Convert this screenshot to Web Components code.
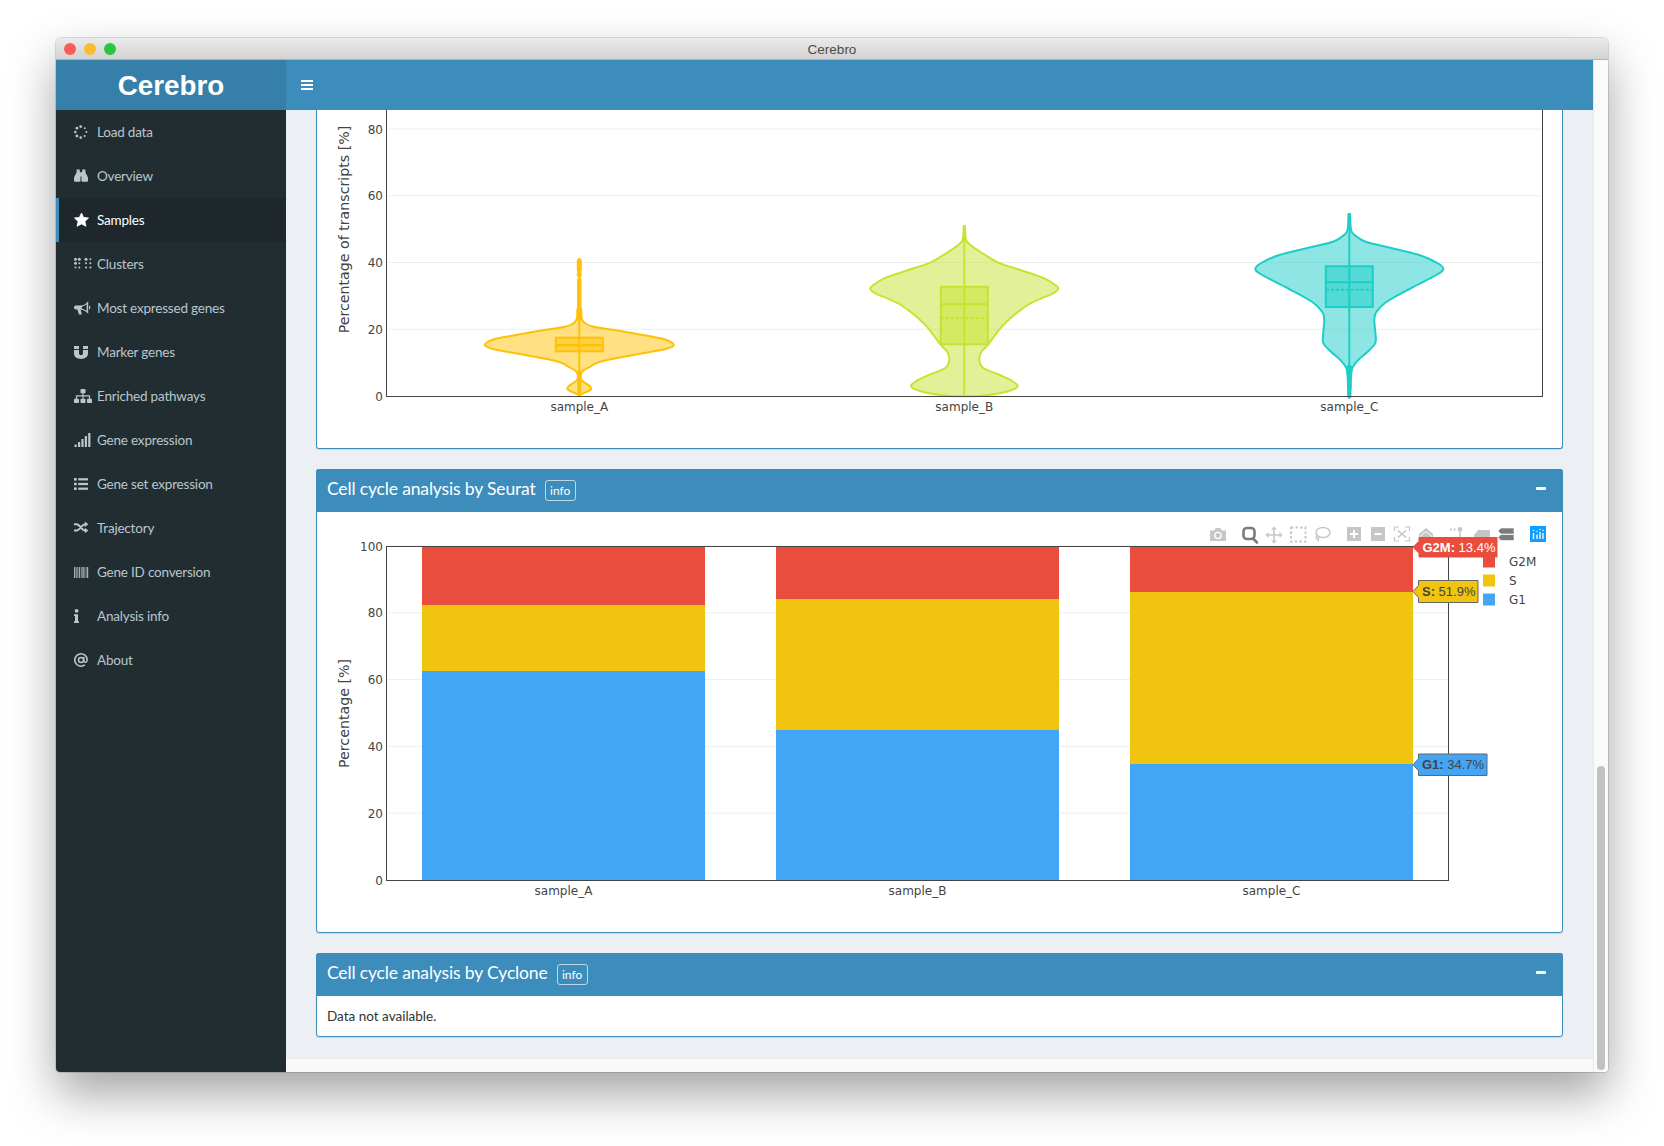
<!DOCTYPE html>
<html lang="en">
<head>
<meta charset="utf-8">
<title>Cerebro</title>
<style>
  html, body { margin: 0; height: 100%; overflow: hidden; background: #fff; }
  body { padding: 38px 56px 0; box-sizing: border-box; }
</style>
</head>
<body>
<mac-window heading="Cerebro">
  <app-sidebar slot="side" brand="Cerebro">
    <side-item icon="spinner">Load data</side-item>
    <side-item icon="binoculars">Overview</side-item>
    <side-item icon="star" active>Samples</side-item>
    <side-item icon="braille">Clusters</side-item>
    <side-item icon="bullhorn">Most expressed genes</side-item>
    <side-item icon="magnet">Marker genes</side-item>
    <side-item icon="sitemap">Enriched pathways</side-item>
    <side-item icon="signal">Gene expression</side-item>
    <side-item icon="list">Gene set expression</side-item>
    <side-item icon="random">Trajectory</side-item>
    <side-item icon="barcode">Gene ID conversion</side-item>
    <side-item icon="info">Analysis info</side-item>
    <side-item icon="at">About</side-item>
  </app-sidebar>
  <app-header slot="top"></app-header>
  <box-panel cropped><violin-chart></violin-chart></box-panel>
  <box-panel heading="Cell cycle analysis by Seurat"><cycle-chart></cycle-chart></box-panel>
  <box-panel heading="Cell cycle analysis by Cyclone"><p class="none">Data not available.</p></box-panel>
</mac-window>

<script>
const SANS = '"Lato", "Noto Sans", sans-serif';
const PLOT_FONT = '"DejaVu Sans", sans-serif';

const ICONS = {
  spinner: `<circle cx="6.7" cy="2.6" r="1.4"/><circle cx="10.8" cy="4.2" r=".9"/><circle cx="12.4" cy="8" r="1"/><circle cx="10.6" cy="12" r="1.1"/><circle cx="6.7" cy="13.6" r="1.3"/><circle cx="2.9" cy="12" r="1.4"/><circle cx="1.3" cy="8" r="1.3"/><circle cx="2.9" cy="4.2" r="1.4"/>`,
  binoculars: `<path d="M2.6 1.5h3.2v2.4h.7v8.8a1 1 0 0 1-1 1H1a1 1 0 0 1-1-1v-2.2C0 8 2 6.5 2.6 4zM11.4 1.5H8.2v2.4h-.7v8.8a1 1 0 0 0 1 1H13a1 1 0 0 0 1-1v-2.2C14 8 12 6.5 11.4 4z"/><rect x="6" y="4.5" width="2" height="4"/>`,
  star: `<polygon stroke="currentColor" stroke-width=".8" stroke-linejoin="round" points="7.5,1 9.62,5.39 14.5,5.95 10.92,9.41 11.97,14.3 7.5,11.9 3.03,14.3 4.08,9.41 .5,5.95 5.38,5.39"/>`,
  braille: `<circle cx="1.5" cy="3.2" r="1.5"/><circle cx="5.3" cy="3.2" r="1.5"/><circle cx="1.5" cy="7.3" r="1.5"/><circle cx="5.3" cy="7.3" r="1"/><circle cx="1.5" cy="11.6" r="1"/><circle cx="5.3" cy="11.6" r="1"/><circle cx="12" cy="3.2" r="1.5"/><circle cx="16.4" cy="3.2" r="1"/><circle cx="12" cy="7.3" r="1"/><circle cx="16.4" cy="7.3" r="1"/><circle cx="12" cy="11.6" r="1"/><circle cx="16.4" cy="11.6" r="1"/>`,
  bullhorn: `<path d="M14.2 1.2v12.6c-2.4-2.4-5-3.8-7.6-4.2l1.3 5H4.9L3.4 9.5H2C.8 9.5 0 8.6 0 7.5s.8-2 2-2h4.5c3 0 5.4-1.6 7.7-4.3zM12.6 4.3c-1.4 1.2-3 2-4.8 2.5v1.6c1.8.4 3.4 1.2 4.8 2.4zM15 5.6a2 2 0 0 1 0 3.8z" fill-rule="evenodd"/>`,
  magnet: `<path d="M0 2h5v3H0zM9 2h5v3H9zM0 6h5v3.3a2 2 0 0 0 4 0V6h5v3.3C14 12.9 11 15 7 15S0 12.9 0 9.3z"/>`,
  sitemap: `<rect x="6.5" y="1" width="5" height="4.2" rx=".7"/><rect x="0" y="10.8" width="5" height="4.2" rx=".7"/><rect x="6.5" y="10.8" width="5" height="4.2" rx=".7"/><rect x="13" y="10.8" width="5" height="4.2" rx=".7"/><path d="M9 5v6M2.5 11V7.9h13V11" fill="none" stroke="currentColor" stroke-width="1.2"/>`,
  signal: `<rect x=".5" y="12.5" width="2.2" height="2.5"/><rect x="4" y="10" width="2.2" height="5"/><rect x="7.4" y="7" width="2.2" height="8"/><rect x="10.8" y="4" width="2.2" height="11"/><rect x="14.2" y="1" width="2.2" height="14"/>`,
  list: `<rect y="2" width="2.7" height="2.6"/><rect y="6.7" width="2.7" height="2.6"/><rect y="11.4" width="2.7" height="2.6"/><rect x="4.2" y="2.2" width="9.8" height="2.2"/><rect x="4.2" y="6.9" width="9.8" height="2.2"/><rect x="4.2" y="11.6" width="9.8" height="2.2"/>`,
  random: `<path d="M0 4.2h2.6c3.4 0 5 6.3 8.6 6.3M0 10.5h2.6c3.4 0 5-6.3 8.6-6.3" fill="none" stroke="currentColor" stroke-width="1.9"/><polygon points="10.8,1.4 14.4,4.2 10.8,7"/><polygon points="10.8,7.7 14.4,10.5 10.8,13.3"/>`,
  barcode: `<path d="M0 3h1.4v11H0zM2 3h.7v11H2zM3.4 3h.7v11h-.7zM4.8 3h1.4v11H4.8zM7 3h.7v11H7zM8.4 3h1.4v11H8.4zM10.4 3h.7v11h-.7zM11.8 3h.7v11h-.7zM13 3h1.2v11H13z" opacity=".85"/>`,
  info: `<circle cx="2.6" cy="2.8" r="1.9"/><path d="M0 6.2h4v7h1v1.9H0v-1.9h1V8H0z"/>`,
  at: `<path d="M13.2 8a6.2 6.2 0 1 0-2.4 4.9" fill="none" stroke="currentColor" stroke-width="1.6"/><circle cx="7" cy="8" r="2.5" fill="none" stroke="currentColor" stroke-width="1.5"/><path d="M9.8 5v4c0 1.8 3.2 1.8 3.4-1" fill="none" stroke="currentColor" stroke-width="1.5"/>`
};

class MacWindow extends HTMLElement {
  connectedCallback() {
    this.attachShadow({ mode: 'open' });
    this.shadowRoot.innerHTML = `
      <style>
        :host {
          display: grid;
          grid-template-columns: 230px 1fr 15px;
          grid-template-rows: 22px 50px 1fr 14px;
          width: 1552px;
          height: 1034px;
          border-radius: 5px 5px 4px 4px;
          overflow: hidden;
          background: #fff;
          box-shadow: 0 0 0 1px rgba(0,0,0,.13), 0 22px 48px rgba(0,0,0,.36);
        }
        .bar {
          grid-column: 1 / -1;
          display: flex;
          align-items: center;
          justify-content: center;
          position: relative;
          box-sizing: border-box;
          padding-top: 1px;
          border-bottom: 1px solid #b4b4b4;
          background: linear-gradient(#ebebeb, #d2d2d2);
          font: 13.5px "Liberation Sans", sans-serif;
          color: #4b4b4b;
        }
        .lights { position: absolute; left: 8px; top: 5px; display: flex; gap: 8px; }
        .lights i { width: 12px; height: 12px; border-radius: 50%; }
        .side { grid-row: 2 / 5; }
        .main {
          grid-column: 2; grid-row: 3;
          display: flex; flex-direction: column; gap: 20px;
          padding: 0 30px;
          overflow: hidden;
          background: #ecf0f5;
        }
        .top { grid-column: 2; grid-row: 2; }
        .foot { grid-column: 2; grid-row: 4; background: #f9f9f9; border-top: 1px solid #e9e9e9; }
        .track {
          grid-column: 3; grid-row: 2 / 5;
          position: relative;
          background: #fafafa;
          border-left: 1px solid #e8e8e8;
        }
        .thumb { position: absolute; left: 3px; right: 3px; bottom: 2px; height: 304px; border-radius: 4px; background: #c2c2c2; }
      </style>
      <div class="bar">
        <div class="lights">
          <i style="background:#fc5b57"></i><i style="background:#fdbc2e"></i><i style="background:#27c840"></i>
        </div>
        ${this.getAttribute('heading')}
      </div>
      <div class="side"><slot name="side"></slot></div>
      <div class="top"><slot name="top"></slot></div>
      <div class="main"><slot></slot></div>
      <div class="foot"></div>
      <div class="track"><div class="thumb"></div></div>
    `;
  }
}

class AppSidebar extends HTMLElement {
  connectedCallback() {
    this.attachShadow({ mode: 'open' });
    this.shadowRoot.innerHTML = `
      <style>
        :host { display: block; height: 100%; background: #222d32; }
        .brand {
          height: 50px;
          box-sizing: border-box;
          padding-top: 1px;
          display: flex; align-items: center; justify-content: center;
          background: #367fa9;
          color: #fff;
          font: bold 27.8px "Liberation Sans", sans-serif;
        }
      </style>
      <div class="brand">${this.getAttribute('brand')}</div>
      <slot></slot>
    `;
  }
}

class SideItem extends HTMLElement {
  connectedCallback() {
    const active = this.hasAttribute('active');
    this.attachShadow({ mode: 'open' });
    this.shadowRoot.innerHTML = `
      <style>
        :host {
          display: flex;
          align-items: center;
          height: 44px;
          box-sizing: border-box;
          padding-left: 18px;
          border-left: 3px solid ${active ? '#3c8dbc' : 'transparent'};
          background: ${active ? '#1e282c' : 'transparent'};
          color: ${active ? '#fff' : '#b8c7ce'};
          font: 13.5px ${SANS};
          letter-spacing: -.2px;
        }
        svg { width: 20px; height: 16px; margin-left: -3px; margin-right: 3px; fill: currentColor; flex: none; }
        slot { display: block; margin-top: -1px; }
      </style>
      <svg viewBox="0 0 20 16">${ICONS[this.getAttribute('icon')]}</svg>
      <slot></slot>
    `;
  }
}

class AppHeader extends HTMLElement {
  connectedCallback() {
    this.attachShadow({ mode: 'open' });
    this.shadowRoot.innerHTML = `
      <style>
        :host { display: flex; align-items: center; height: 50px; padding-left: 15px; background: #3c8dbc; }
        .burger { display: flex; flex-direction: column; gap: 2px; width: 12px; }
        .burger i { height: 2px; background: #fff; }
      </style>
      <div class="burger"><i></i><i></i><i></i></div>
    `;
  }
}

class BoxPanel extends HTMLElement {
  connectedCallback() {
    const cropped = this.hasAttribute('cropped');
    this.attachShadow({ mode: 'open' });
    this.shadowRoot.innerHTML = `
      <style>
        :host {
          display: block;
          flex: none;
          box-sizing: border-box;
          border: 1px solid #3c8dbc;
          ${cropped ? 'border-top: 0; border-radius: 0 0 3px 3px;' : 'border-radius: 3px;'}
          background: #fff;
          box-shadow: 0 1px 1px rgba(0,0,0,.1);
          font: 13.5px ${SANS};
          color: #333;
        }
        .head {
          display: flex;
          align-items: center;
          gap: 9px;
          box-sizing: border-box;
          height: 43px;
          margin: -1px -1px 0;
          padding: 0 17px 4px 11px;
          background: #3c8dbc;
          border-radius: 3px 3px 0 0;
          color: #fff;
          font-size: 17.5px;
          letter-spacing: -.15px;
        }
        .info {
          display: flex; align-items: center; justify-content: center;
          box-sizing: border-box;
          width: 31px; height: 21px;
          margin-top: 4px;
          border: 1px solid rgba(255,255,255,.65);
          border-radius: 3px;
          font-size: 12px;
          letter-spacing: 0;
        }
        .minus { margin-left: auto; width: 10px; height: 2.5px; background: #fff; border-radius: 1px; }
        ::slotted(p) { margin: 0; padding: 11px 10px; line-height: 18px; color: #333; }
      </style>
      ${cropped ? '' : `
      <div class="head">
        <span>${this.getAttribute('heading')}</span>
        <span class="info">info</span>
        <span class="minus"></span>
      </div>`}
      <slot></slot>
    `;
  }
}

function tickText(x, y, s, anchor) {
  return `<text x="${x}" y="${y}" text-anchor="${anchor}">${s}</text>`;
}

function yAxis(x0, x1, y0, step, max) {
  let out = '';
  for (let v = 0; v <= max; v += 20) {
    const y = y0 - (v / 20) * step;
    if (v > 0) out += `<line x1="${x0}" x2="${x1}" y1="${y}" y2="${y}" stroke="#eee"/>`;
    out += tickText(x0 - 4, y + 4.5, v, 'end');
  }
  return out;
}

// smooth closed outline from a half-width profile, mirrored around cx
function violinPath(cx, pts) {
  const right = pts.map(p => [cx + p[1], p[0]]);
  const left = pts.slice().reverse().map(p => [cx - p[1], p[0]]);
  const all = right.concat(left);
  let d = `M${all[0][0]} ${all[0][1]}`;
  for (let i = 0; i < all.length - 1; i++) {
    const p0 = all[Math.max(i - 1, 0)], p1 = all[i], p2 = all[i + 1], p3 = all[Math.min(i + 2, all.length - 1)];
    const c1 = [p1[0] + (p2[0] - p0[0]) / 6, p1[1] + (p2[1] - p0[1]) / 6];
    const c2 = [p2[0] - (p3[0] - p1[0]) / 6, p2[1] - (p3[1] - p1[1]) / 6];
    d += `C${c1[0].toFixed(1)} ${c1[1].toFixed(1)} ${c2[0].toFixed(1)} ${c2[1].toFixed(1)} ${p2[0].toFixed(1)} ${p2[1].toFixed(1)}`;
  }
  return d + 'Z';
}

function violin(v) {
  const { cx, color, pts, box, top, bottom } = v;
  const hw = 23.5;
  return `
    <g stroke="${color}" fill="${color}">
      <path d="${violinPath(cx, pts)}" fill-opacity=".5" stroke-width="2" stroke-linejoin="round"/>
      <line x1="${cx}" x2="${cx}" y1="${top}" y2="${bottom}" stroke-width="2"/>
      <rect x="${cx - hw}" y="${box[0]}" width="${hw * 2}" height="${box[1] - box[0]}" fill-opacity=".5" stroke-width="2"/>
      <line x1="${cx - hw}" x2="${cx + hw}" y1="${box[2]}" y2="${box[2]}" stroke-width="2"/>
      <line x1="${cx - hw}" x2="${cx + hw}" y1="${box[3]}" y2="${box[3]}" stroke-width="2" stroke-dasharray="3 2"/>
      ${(v.thick || []).map(t => `<line x1="${cx}" x2="${cx}" y1="${t[0]}" y2="${t[1]}" stroke-width="${t[2]}" stroke-linecap="round"/>`).join('')}
    </g>`;
}

class ViolinChart extends HTMLElement {
  connectedCallback() {
    const A = y => 100 + y / 3;
    const data = [
      { cx: 579.3, color: '#ffc107', top: 258, bottom: 395, box: [337.7, 351.3, 345, 346],
        thick: [[261, 270, 5], [274, 275, 5], [280, 318, 4.5], [310, 318, 6], [372, 392, 4]],
        pts: [[A(640), .5], [A(660), 3], [A(670), 6], [A(680), 14], [A(690), 35], [A(702), 58], [A(715), 81], [A(725), 91], [A(737), 94], [A(749), 83], [A(765), 54], [A(785), 21], [A(800), 11], [A(815), 3], [A(835), 1.5], [A(847), 5], [A(860), 11], [A(870), 11], [A(880), 4], [A(886), 0]] },
      { cx: 964.3, color: '#c6e32f', top: 226, bottom: 395, box: [286.7, 344.3, 304.3, 318],
        pts: [[226, .6], [235, 1], [241.7, 2.5], [248.3, 10.5], [255, 21], [262.7, 34], [270, 56], [278.3, 80], [285, 91], [289, 94], [294, 88], [298.3, 77], [304, 65], [311.7, 54], [318.3, 46], [328.3, 36], [344.3, 24], [352, 17], [360, 15], [368, 19], [375, 35.5], [381.7, 49], [387, 53], [391.7, 42], [395, 24], [396, 14], [396.2, 0]] },
      { cx: 1349.3, color: '#1ccdc8', top: 214, bottom: 396, box: [266.3, 307, 282.3, 289.7],
        thick: [[367, 388, 4.5], [368, 372, 6]],
        pts: [[214, .8], [225, 1.2], [232, 2.5], [237, 8], [242, 17], [248, 42], [255, 70], [263, 88], [269, 94], [275, 87], [288, 62], [302, 37], [312, 27], [320, 25], [332, 26], [343, 26], [352, 18], [360, 9], [368, 3], [380, 1.5], [396, 1]] }
    ];
    this.attachShadow({ mode: 'open' });
    this.shadowRoot.innerHTML = `
      <style>
        :host { display: block; }
        svg { display: block; font: 12px ${PLOT_FONT}; fill: #444; }
      </style>
      <svg width="1245" height="338" viewBox="317 110 1245 338">
        ${yAxis(387, 1542.5, 396, 66.75, 80)}
        ${data.map(violin).join('')}
        <path d="M386.5 110V396.5H1542.5V110" fill="none" stroke="#444" shape-rendering="crispEdges"/>
        ${tickText(579.3, 411, 'sample_A', 'middle')}
        ${tickText(964.3, 411, 'sample_B', 'middle')}
        ${tickText(1349.3, 411, 'sample_C', 'middle')}
        <text transform="translate(349 229.5) rotate(-90)" text-anchor="middle" font-size="14.2">Percentage of transcripts [%]</text>
      </svg>
    `;
  }
}

function hoverLabel(tip, x0, x1, y0, y1, fill, stroke, color, key, val) {
  const my = (y0 + y1) / 2;
  return `
    <path d="M${tip} ${my}L${x0} ${my - 6}V${y0}H${x1}V${y1}H${x0}V${my + 6}Z" fill="${fill}" stroke="${stroke}"/>
    <text x="${x0 + 3.5}" y="${my + 4.5}" font-family="Liberation Sans" font-size="13" style="fill:${color}"><tspan font-weight="bold">${key}:</tspan> ${val}</text>`;
}

class CycleChart extends HTMLElement {
  connectedCallback() {
    const g = '#c6c6c6', d = '#7c7c7c';
    const bars = [
      [422, 605, 671],
      [776, 599, 729.5],
      [1130, 592, 764]
    ].map(b => `
      <rect x="${b[0]}" y="546" width="283" height="${b[1] - 546}" fill="#e94d3d"/>
      <rect x="${b[0]}" y="${b[1]}" width="283" height="${b[2] - b[1]}" fill="#f1c40f"/>
      <rect x="${b[0]}" y="${b[2]}" width="283" height="${880 - b[2]}" fill="#42a5f5"/>`).join('');
    const toolbar = `
      <path d="M1210 530.5h4.2l1.5-2.5h4.6l1.5 2.5h4.2v10.5h-16z" fill="${g}"/><circle cx="1218" cy="535.5" r="3.8" fill="#fff"/><circle cx="1218" cy="535.5" r="2.4" fill="${g}"/>
      <path d="M1253 538.5l4 4" stroke="${d}" stroke-width="2.6" stroke-linecap="round"/><rect x="1243.5" y="528" width="11" height="11" rx="3.5" fill="none" stroke="${d}" stroke-width="2.6"/>
      <path d="M1274 528v14M1267 535h14" stroke="${g}" stroke-width="1.6"/><path d="M1274 526.5l-3 3h6zM1274 543.5l-3-3h6zM1265.5 535l3-3v6zM1282.5 535l-3-3v6z" fill="${g}"/>
      <rect x="1291" y="527.5" width="14.5" height="14" fill="none" stroke="${g}" stroke-width="2" stroke-dasharray="2.4 2.2"/>
      <ellipse cx="1323" cy="532.5" rx="7" ry="5" fill="none" stroke="${g}" stroke-width="1.5"/><path d="M1317 536c-2 3 .5 3.5 1.5 2.5l-.5 3" fill="none" stroke="${g}" stroke-width="1.5"/>
      <rect x="1347" y="527" width="14" height="14" fill="${g}"/><path d="M1354 530v8M1350 534h8" stroke="#fff" stroke-width="2"/>
      <rect x="1371" y="527" width="14" height="14" fill="${g}"/><path d="M1374.5 534h7" stroke="#fff" stroke-width="2"/>
      <path d="M1394.5 531v-4h4.5M1405 527h4.5v4M1409.5 537v4h-4.5M1399 541h-4.5v-4" fill="none" stroke="${g}" stroke-width="1.2"/><path d="M1398 530.5l8 7M1406 530.5l-8 7" stroke="${g}" stroke-width="1.6"/>
      <path d="M1419 534l7-6 7 6v3h-14z" fill="${g}"/><path d="M1420 536.5l6-5 6 5" fill="none" stroke="#fff"/>
      <path d="M1450 529.5h6" stroke="${g}" stroke-width="2" stroke-dasharray="2 1.5"/><circle cx="1460" cy="529.5" r="2.4" fill="${g}"/><path d="M1460 532v5" stroke="${g}" stroke-width="1.5"/>
      <path d="M1474 535l4-5h12v7h-16z" fill="${g}"/>
      <path d="M1498 531l3-3h13v6h-13zM1498 537.5l3-3h13v6h-13z" fill="${d}" stroke="#fff" stroke-width=".6"/>
      <rect x="1530" y="526" width="16" height="16" fill="#119dff"/>
      <path d="M1533.5 533v6M1537 534.5v4.5M1540 532v7M1543 533v6" stroke="#fff" stroke-width="1.3"/>
      <path d="M1533.5 530.5h.1M1537 531.5h.1M1540 529.5h.1M1543 530.5h.1" stroke="#fff" stroke-width="1.3" stroke-linecap="round"/>`;
    this.attachShadow({ mode: 'open' });
    this.shadowRoot.innerHTML = `
      <style>
        :host { display: block; }
        svg { display: block; font: 12px ${PLOT_FONT}; fill: #444; }
      </style>
      <svg width="1245" height="420" viewBox="317 512 1245 420">
        ${yAxis(387, 1448, 880, 66.8, 100)}
        ${bars}
        <rect x="386.5" y="546.5" width="1062" height="334" fill="none" stroke="#444" shape-rendering="crispEdges"/>
        ${tickText(563.5, 895, 'sample_A', 'middle')}
        ${tickText(917.5, 895, 'sample_B', 'middle')}
        ${tickText(1271.5, 895, 'sample_C', 'middle')}
        <text transform="translate(349 713.5) rotate(-90)" text-anchor="middle" font-size="14.2">Percentage [%]</text>
        ${toolbar}
        <rect x="1483" y="555.5" width="12" height="12" fill="#e94d3d"/>
        <rect x="1483" y="574.5" width="12" height="12" fill="#f1c40f"/>
        <rect x="1483" y="593.5" width="12" height="12" fill="#42a5f5"/>
        ${tickText(1509, 566, 'G2M', 'start')}
        ${tickText(1509, 585, 'S', 'start')}
        ${tickText(1509, 604, 'G1', 'start')}
        ${hoverLabel(1413, 1419, 1497, 537.5, 557, '#e94d3d', '#e94d3d', '#fff', 'G2M', '13.4%')}
        ${hoverLabel(1413, 1418.5, 1478, 580.5, 602.5, '#f1c40f', '#666', '#444', 'S', '51.9%')}
        ${hoverLabel(1413, 1418.5, 1487, 754, 775.5, '#42a5f5', '#666', '#444', 'G1', '34.7%')}
      </svg>
    `;
  }
}

customElements.define('mac-window', MacWindow);
customElements.define('app-sidebar', AppSidebar);
customElements.define('side-item', SideItem);
customElements.define('app-header', AppHeader);
customElements.define('box-panel', BoxPanel);
customElements.define('violin-chart', ViolinChart);
customElements.define('cycle-chart', CycleChart);
</script>
</body>
</html>
